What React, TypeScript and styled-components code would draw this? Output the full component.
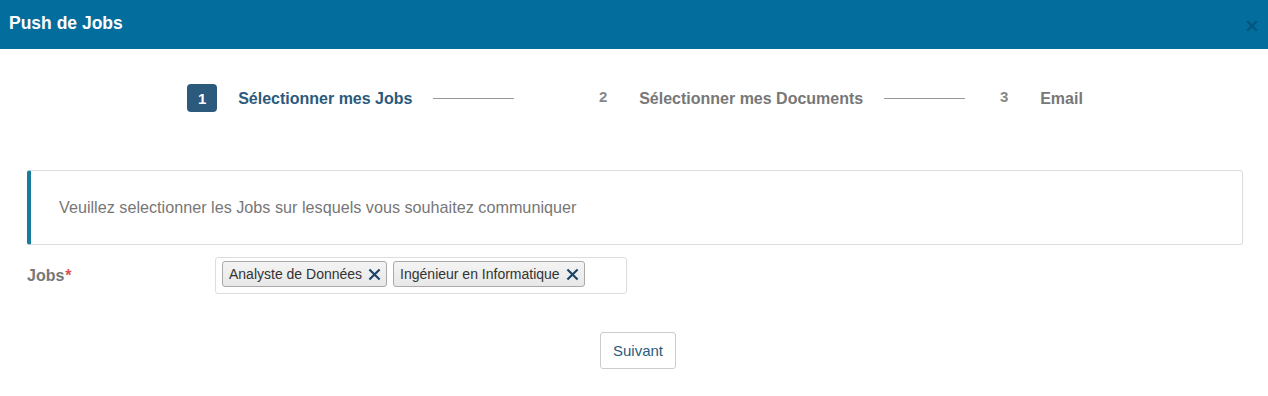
import React from 'react'
import styled, { createGlobalStyle } from 'styled-components'

const GlobalStyle = createGlobalStyle`
  body {
    margin: 0;
    background: #fff;
    font-family: "Liberation Sans", Arial, sans-serif;
  }
`

interface Step {
  label: string
  active?: boolean
}

const steps: Step[] = [
  { label: 'Sélectionner mes Jobs', active: true },
  { label: 'Sélectionner mes Documents' },
  { label: 'Email' },
]

const jobs = ['Analyste de Données', 'Ingénieur en Informatique']

const CloseIcon = ({ size, color, width }: { size: number; color: string; width: number }) => (
  <svg width={size} height={size} viewBox="0 0 12 12">
    <path d="M2 2 L10 10 M10 2 L2 10" stroke={color} strokeWidth={width} strokeLinecap="square" fill="none" />
  </svg>
)

const App = () => (
  <>
    <GlobalStyle />
    <Header>
      <Title>Push de Jobs</Title>
      <HeaderClose>
        <CloseIcon size={12} color="#02577e" width={2.4} />
      </HeaderClose>
    </Header>
    <Body>
      <Stepper>
        {steps.map((step, i) => (
          <StepItem key={step.label}>
            <Badge $active={step.active}>{i + 1}</Badge>
            <StepLabel $active={step.active}>{step.label}</StepLabel>
            {i < steps.length - 1 && <Tail />}
          </StepItem>
        ))}
      </Stepper>
      <Alert>Veuillez selectionner les Jobs sur lesquels vous souhaitez communiquer</Alert>
      <FormRow>
        <Label>
          Jobs<Required>*</Required>
        </Label>
        <Select>
          {jobs.map(job => (
            <Tag key={job}>
              {job}
              <TagRemove>
                <CloseIcon size={13} color="#1d4466" width={2} />
              </TagRemove>
            </Tag>
          ))}
        </Select>
      </FormRow>
      <Actions>
        <Button>Suivant</Button>
      </Actions>
    </Body>
  </>
)

export default App

const Header = styled.header`
  height: 49px;
  background: #036d9e;
  display: flex;
  align-items: center;
  justify-content: space-between;
  padding: 0 10px 0 9px;
  box-sizing: border-box;
`

const Title = styled.h1`
  margin: 0 0 2px 0;
  color: #fff;
  font-size: 17.5px;
  font-weight: bold;
`

const HeaderClose = styled.span`
  display: flex;
  margin-top: 2px;
`

const Body = styled.main`
  padding: 35px 25px 0 27px;
`

const Stepper = styled.ol`
  list-style: none;
  margin: 0 0 58px 0;
  padding: 0;
  display: grid;
  grid-template-columns: 401px 401px auto;
  justify-content: center;
`

const StepItem = styled.li`
  display: flex;
  align-items: center;
  height: 28px;
`

const Badge = styled.span<{ $active?: boolean }>`
  width: 30px;
  height: 28px;
  border-radius: 4px;
  display: flex;
  align-items: center;
  justify-content: center;
  font-size: 15px;
  font-weight: bold;
  background: ${p => (p.$active ? '#2b5a7d' : 'transparent')};
  color: ${p => (p.$active ? '#fff' : '#888')};
  margin-top: ${p => (p.$active ? '0' : '-4px')};
`

const StepLabel = styled.span<{ $active?: boolean }>`
  margin-left: 21px;
  margin-top: 2px;
  font-size: 16px;
  font-weight: bold;
  color: ${p => (p.$active ? '#2b5a7d' : '#777')};
  white-space: nowrap;
`

const Tail = styled.span`
  width: 81px;
  height: 1px;
  background: #999;
  margin-left: 21px;
`

const Alert = styled.div`
  border: 1px solid #ddd;
  border-left: 4px solid #1a7b9c;
  border-radius: 3px;
  height: 75px;
  box-sizing: border-box;
  padding: 0 0 0 28px;
  display: flex;
  align-items: center;
  font-size: 16.2px;
  color: #777;
`

const FormRow = styled.div`
  display: flex;
  align-items: center;
  margin-top: 12px;
`

const Label = styled.label`
  width: 188px;
  font-size: 16px;
  font-weight: bold;
  color: #777;
`

const Required = styled.span`
  color: #d9534f;
  margin-left: 1px;
`

const Select = styled.div`
  width: 412px;
  height: 37px;
  box-sizing: border-box;
  border: 1px solid #ddd;
  border-radius: 3px;
  display: flex;
  align-items: flex-start;
  gap: 6px;
  padding: 3px 0 0 6px;
`

const Tag = styled.span`
  height: 26px;
  box-sizing: border-box;
  display: inline-flex;
  align-items: center;
  gap: 6px;
  padding: 0 5px 1px 6px;
  border: 1px solid #aaa;
  border-radius: 3px;
  background: linear-gradient(#f4f4f4, #e8e8e8);
  font-size: 14px;
  color: #333;
`

const TagRemove = styled.span`
  display: flex;
  margin-top: 1px;
  cursor: pointer;
`

const Actions = styled.div`
  display: flex;
  justify-content: center;
  margin-top: 38px;
  padding-left: 6px;
`

const Button = styled.button`
  height: 37px;
  padding: 0 12px;
  border: 1px solid #ccc;
  border-radius: 3px;
  background: #fff;
  font-family: inherit;
  font-size: 15px;
  color: #2b5a7d;
`
